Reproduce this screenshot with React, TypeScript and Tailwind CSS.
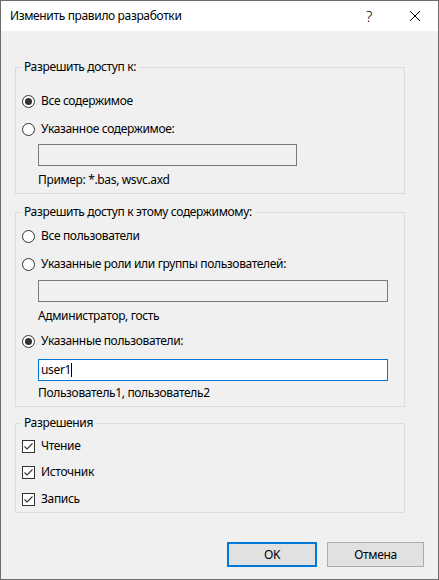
import React from "react";

const font = { fontFamily: '"Noto Sans", "Liberation Sans", sans-serif' };

const Radio = ({ checked, label }: { checked?: boolean; label: string }) => (
  <div className="flex items-center h-[16px] ml-[6px]">
    <span className="w-[13px] h-[13px] rounded-full border border-[#333333] bg-white flex items-center justify-center shrink-0">
      {checked && <span className="w-[7px] h-[7px] rounded-full bg-[#333333]" />}
    </span>
    <span className="ml-[6px]">{label}</span>
  </div>
);

const Check = ({ label }: { label: string }) => (
  <div className="flex items-center h-[16px] ml-[6px]">
    <span className="w-[13px] h-[13px] border border-[#333333] bg-white shrink-0 flex items-center justify-center">
      <svg width="11" height="11" viewBox="0 0 11 11">
        <path d="M1.5 5.5 L4 8 L9.5 2.5" fill="none" stroke="#333333" strokeWidth="1.1" />
      </svg>
    </span>
    <span className="ml-[6px]">{label}</span>
  </div>
);

const Group = ({ title, className, children }: { title: string; className?: string; children: React.ReactNode }) => (
  <fieldset className={`w-[390px] border border-[#dcdcdc] pb-[5px] ${className ?? ""}`}>
    <legend className="ml-[5px] px-[3px] h-[16px] leading-[16px]">{title}</legend>
    <div className="flex flex-col">{children}</div>
  </fieldset>
);

const Hint = ({ text, className }: { text: string; className?: string }) => (
  <div className={`ml-[22px] h-[16px] leading-[16px] ${className ?? ""}`}>{text}</div>
);

export default function App() {
  return (
    <div
      className="w-[439px] h-[580px] border border-[#6d6d6d] bg-[#f0f0f0] flex flex-col text-[12px] tracking-[-0.35px] text-black"
      style={font}
    >
      {/* title bar */}
      <div className="h-[30px] bg-white flex items-center shrink-0">
        <span className="ml-[9px] flex-1">Изменить правило разработки</span>
        <div className="w-[46px] h-full flex items-center justify-center text-[15px] font-light">?</div>
        <div className="w-[46px] h-full flex items-center justify-center">
          <svg width="10" height="10" viewBox="0 0 10 10">
            <path d="M0 0 L10 10 M10 0 L0 10" stroke="#000" strokeWidth="1" />
          </svg>
        </div>
      </div>

      <div className="flex flex-col pl-[14px] pr-[14px] pt-[28px]">
        <Group title="Разрешить доступ к:">
          <div className="mt-[18px]">
            <Radio checked label="Все содержимое" />
          </div>
          <div className="mt-[12px]">
            <Radio label="Указанное содержимое:" />
          </div>
          <div className="mt-[7px] ml-[22px] w-[259px] h-[22px] border border-[#7a7a7a]" />
          <Hint className="mt-[6px]" text="Пример: *.bas, wsvc.axd" />
        </Group>

        <Group title="Разрешить доступ к этому содержимому:" className="mt-[10px]">
          <div className="mt-[8px]">
            <Radio label="Все пользователи" />
          </div>
          <div className="mt-[12px]">
            <Radio label="Указанные роли или группы пользователей:" />
          </div>
          <div className="mt-[8px] ml-[22px] w-[350px] h-[22px] border border-[#7a7a7a]" />
          <Hint className="mt-[6px]" text="Администратор, гость" />
          <div className="mt-[9px]">
            <Radio checked label="Указанные пользователи:" />
          </div>
          <div className="mt-[10px] ml-[22px] w-[350px] h-[22px] border border-[#0078d7] bg-white flex items-center pl-[2px]">
            <span>user1</span>
            <span className="w-[1px] h-[14px] bg-black" />
          </div>
          <Hint className="mt-[4px]" text="Пользователь1, пользователь2" />
        </Group>

        <Group title="Разрешения" className="mt-[8px]">
          <div className="mt-[7px]">
            <Check label="Чтение" />
          </div>
          <div className="mt-[10px]">
            <Check label="Источник" />
          </div>
          <div className="mt-[11px]">
            <Check label="Запись" />
          </div>
        </Group>

        <div className="flex justify-end gap-[10px] mt-[29px]">
          <button className="w-[90px] h-[25px] border-2 border-[#0078d7] bg-[#e1e1e1]">OK</button>
          <button className="w-[97px] h-[25px] border border-[#adadad] bg-[#e1e1e1]">Отмена</button>
        </div>
      </div>
    </div>
  );
}
